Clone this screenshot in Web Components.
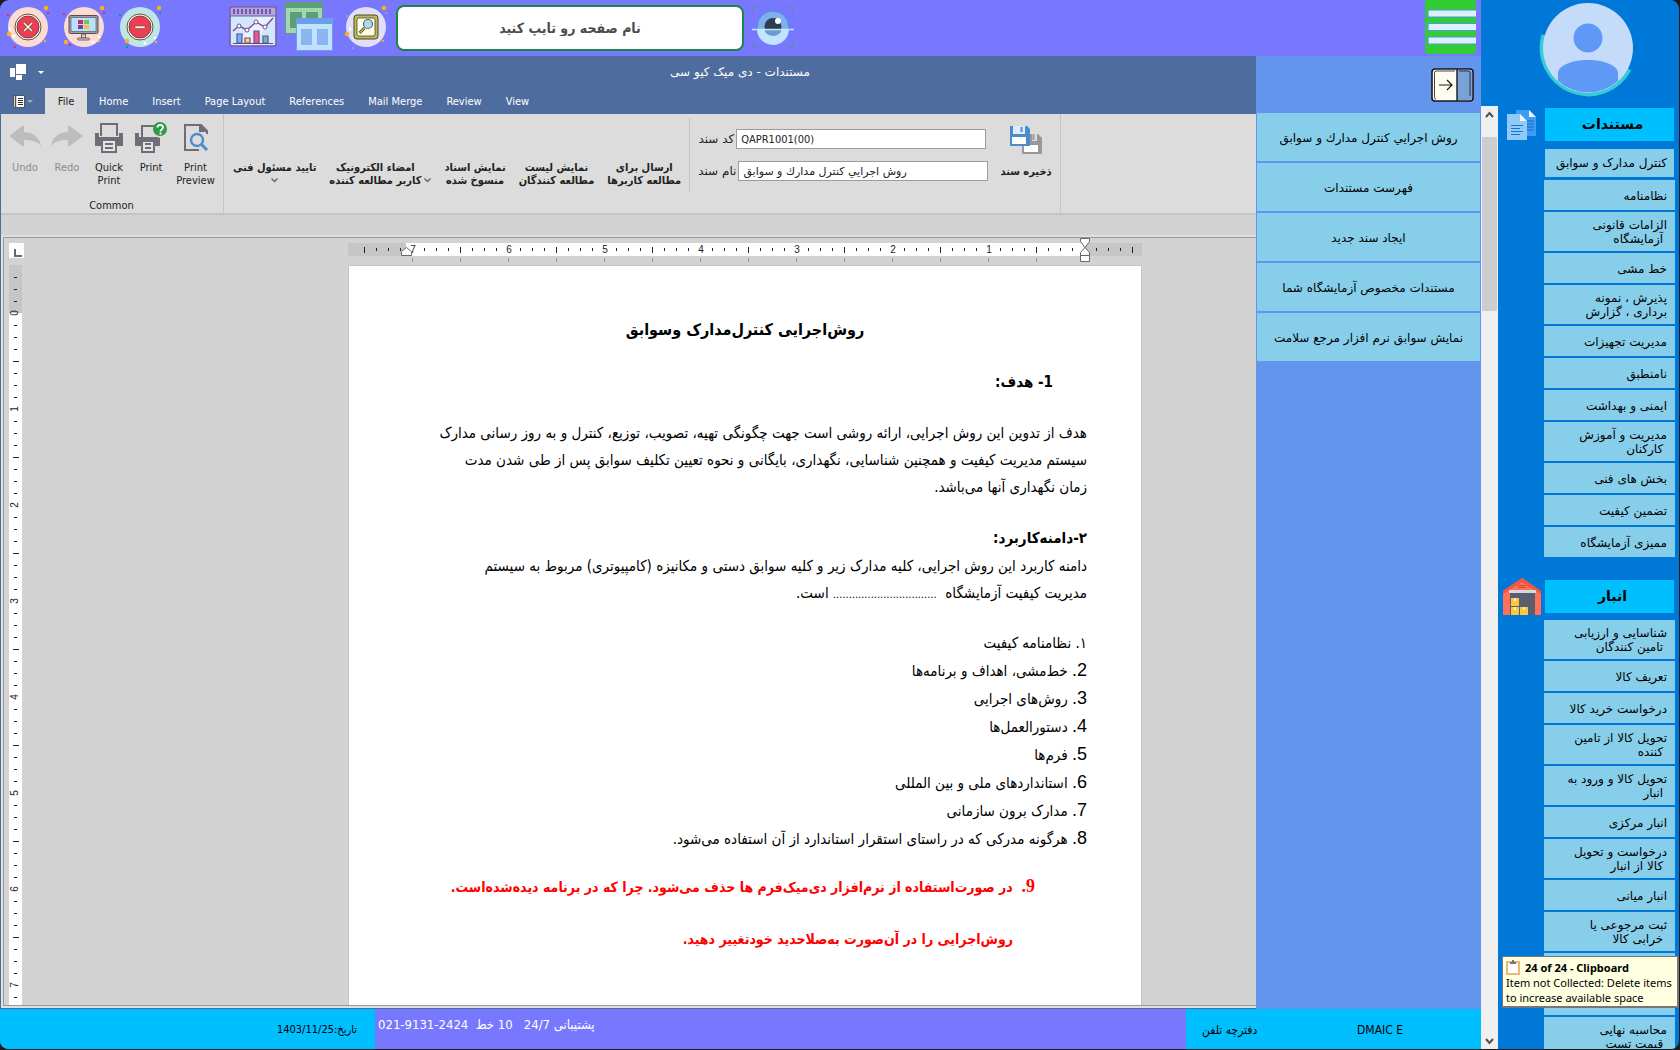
<!DOCTYPE html>
<html lang="fa">
<head>
<meta charset="utf-8">
<title>مستندات - دی میک کیو سی</title>
<style>
    html, body {
        height: 100%;
        margin: 0;
    }

    body {
        --wide: "DejaVu Sans", sans-serif;
        background: #1c1c1c;
        font-family: "DejaVu Sans Condensed", "DejaVu Sans", sans-serif;
        font-size: 11px;
        color: #000;
        overflow: hidden;
    }
</style>
</head>
<body>
<app-window>
    <top-bar slot="top"></top-bar>
    <word-editor slot="editor">
        <doc-page></doc-page>
    </word-editor>
    <doc-menu slot="menu">
        <menu-button>روش اجرايي كنترل مدارك و سوابق</menu-button>
        <menu-button>فهرست مستندات</menu-button>
        <menu-button>ایجاد سند جدید</menu-button>
        <menu-button>مستندات مخصوص آزمایشگاه شما</menu-button>
        <menu-button>نمایش سوابق نرم افزار مرجع سلامت</menu-button>
    </doc-menu>
    <status-bar slot="status"></status-bar>
    <side-nav slot="nav">
        <nav-section icon="docs" heading="مستندات">
            <nav-item current>کنترل مدارک و سوابق</nav-item>
            <nav-item>نظامنامه</nav-item>
            <nav-item>الزامات قانونی<br>&nbsp;آزمایشگاه</nav-item>
            <nav-item>خط مشی</nav-item>
            <nav-item>پذیرش ، نمونه<br>برداری ، گزارش</nav-item>
            <nav-item>مدیریت تجهیزات</nav-item>
            <nav-item>نامنطبق</nav-item>
            <nav-item>ایمنی و بهداشت</nav-item>
            <nav-item>مدیریت و آموزش<br>&nbsp;کارکنان</nav-item>
            <nav-item>بخش های فنی</nav-item>
            <nav-item>تضمین کیفیت</nav-item>
            <nav-item>ممیزی آزمایشگاه</nav-item>
        </nav-section>
        <nav-section icon="store" heading="انبار">
            <nav-item>شناسایی و ارزیابی<br>&nbsp;تامین کنندگان</nav-item>
            <nav-item>تعریف کالا</nav-item>
            <nav-item>درخواست خرید کالا</nav-item>
            <nav-item>تحویل کالا از تامین<br>&nbsp;کننده</nav-item>
            <nav-item>تحویل کالا و ورود به<br>&nbsp;انبار</nav-item>
            <nav-item>انبار مرکزی</nav-item>
            <nav-item>درخواست و تحویل<br>&nbsp;کالا از انبار</nav-item>
            <nav-item>انبار میانی</nav-item>
            <nav-item>ثبت مرجوعی یا<br>&nbsp;خرابی کالا</nav-item>
            <nav-item></nav-item>
            <nav-item></nav-item>
            <nav-item>محاسبه نهایی<br>&nbsp;قیمت تست</nav-item>
        </nav-section>
    </side-nav>
    <clip-toast slot="toast"></clip-toast>
</app-window>

<script>
const ICONS = {
    close: `<svg width="44" height="46" viewBox="0 0 44 46">
        <circle cx="22" cy="23" r="20" fill="#fadcd2"/>
        <circle cx="22" cy="23" r="13" fill="#fff" stroke="#6b4a3c" stroke-width="1"/>
        <circle cx="22" cy="23" r="11" fill="#ef3d55" stroke="#6b4a3c" stroke-width="1"/>
        <path d="M18 19l8 8M26 19l-8 8" stroke="#6b4a3c" stroke-width="3"/>
        <path d="M18 19l8 8M26 19l-8 8" stroke="#fff4e4" stroke-width="1.6"/>
        <circle cx="40" cy="4" r="2.2" fill="#fbb216"/><circle cx="3" cy="30" r="2.2" fill="#fbb216"/>
        <circle cx="39" cy="37" r="1.2" fill="#fbb216"/><circle cx="8" cy="32" r="1.4" fill="#fff"/><circle cx="4" cy="25" r="1.2" fill="#fff"/>
        <path d="M1 10h2v2H1zM41 8h2v2h-2zM8 42h2v2H8z" fill="#ef2c4c"/></svg>`,
    desktop: `<svg width="44" height="46" viewBox="0 0 44 46">
        <circle cx="22" cy="23" r="20" fill="#fadcd2"/>
        <rect x="7" y="11.5" width="29" height="18" rx="1.5" fill="#9aa0b4" stroke="#5d4a4a"/>
        <rect x="9" y="13.5" width="25" height="14" fill="#b4e3fb" stroke="#5d4a4a" stroke-width=".6"/>
        <path d="M19.5 30h4v4h-4z" fill="#ccd" stroke="#5d4a4a" stroke-width=".8"/>
        <rect x="15.5" y="34" width="12" height="2" rx="1" fill="#ccd" stroke="#5d4a4a" stroke-width=".8"/>
        <path d="M16 16h5v4h-5z" fill="#d9245c"/><path d="M22 16h5v4h-5z" fill="#7bc05a"/>
        <path d="M16 21h5v4h-5z" fill="#7b3f9e"/><path d="M22 21h5v4h-5z" fill="#f5c32c"/>
        <circle cx="40" cy="4" r="2.2" fill="#fbb216"/><circle cx="4" cy="38" r="2.2" fill="#fbb216"/>
        <circle cx="37" cy="37" r="1.2" fill="#fbb216"/><circle cx="31" cy="38" r="1.6" fill="#fff"/><circle cx="37" cy="33" r="1.2" fill="#fff"/>
        <path d="M1 9h2v2H1zM41 8h2v2h-2zM7 40h2v2H7z" fill="#ef2c4c"/></svg>`,
    minimize: `<svg width="44" height="46" viewBox="0 0 44 46">
        <circle cx="22" cy="23" r="20" fill="#bfe6e2"/>
        <circle cx="22" cy="23" r="13" fill="#fff" stroke="#6b4a3c"/>
        <circle cx="22" cy="23" r="11" fill="#ef3d55" stroke="#6b4a3c"/>
        <rect x="17" y="22" width="10" height="2.5" fill="#fff4e4" stroke="#6b4a3c" stroke-width=".6"/>
        <circle cx="41" cy="4" r="2.2" fill="#fbb216"/><circle cx="9" cy="37" r="2.2" fill="#fbb216"/>
        <circle cx="38" cy="38" r="1.2" fill="#fbb216"/><circle cx="27" cy="39" r="1.6" fill="#fff"/><circle cx="37" cy="34" r="1.2" fill="#fff"/>
        <path d="M1 10h2v2H1zM41 8h2v2h-2zM8 42h2v2H8z" fill="#0b9a98"/></svg>`,
    chart: `<svg width="48" height="42" viewBox="0 0 48 42">
        <rect x="1" y="1" width="46" height="39" rx="2" fill="#cfe8fb" stroke="#7c5aa6" stroke-width="1.6"/>
        <rect x="2" y="2" width="44" height="8" fill="#b3a5e0"/><path d="M1 10h46" stroke="#7c5aa6"/>
        <path d="M5 3v5M9 3v5M13 3v5M17 3v5M21 3v5M25 3v5M29 3v5M33 3v5M37 3v5M41 3v5" stroke="#5c4894" stroke-width="1.6"/>
        <path d="M28 11l-20 28h14L44 13V11z" fill="#e7f4ff"/>
        <path d="M4 25l6-5 8 4 9-8 9 5 8-9" fill="none" stroke="#7c4a90" stroke-width="1.4"/>
        <g fill="#fff" stroke="#7c4a90"><circle cx="10" cy="20" r="2"/><circle cx="18" cy="24" r="2"/><circle cx="27" cy="16" r="2"/><circle cx="36" cy="21" r="2"/></g>
        <g stroke="#6d4a90" stroke-width="1.2"><path fill="#62b9f4" d="M8 28h5v9H8z"/><path fill="#f9d65c" d="M16 32h5v5h-5z"/><path fill="#ef5a84" d="M25 25h5v12h-5z"/><path fill="#66c2a4" d="M34 30h5v7h-5z"/><path d="M4 37.5h40"/></g></svg>`,
    windows: `<svg width="51" height="49" viewBox="0 0 51 49">
        <path d="M0 0h38v32H0z" fill="#5b9f78"/><path d="M1 6h36v25H1z" fill="#a5d6b0"/>
        <path d="M5 10h12v16H5zM21 10h12v10H21z" fill="#5b9f78"/>
        <path d="M11 16h37v33H11z" fill="#6d9fe8"/><path d="M12 22h35v26H12z" fill="#bfe3ff"/>
        <path d="M16 27h11v16H16zM32 27h11v16H32z" fill="#8ab5f0"/></svg>`,
    find: `<svg width="44" height="46" viewBox="0 0 44 46">
        <circle cx="22" cy="23" r="20" fill="#e0dff7"/>
        <rect x="10" y="11" width="24" height="24" rx="3" fill="#b9b860" stroke="#4e4a20"/>
        <rect x="13" y="14" width="18" height="18" rx="2" fill="#fffce8" stroke="#4e4a20" stroke-width=".8"/>
        <circle cx="24" cy="20" r="4.5" fill="#a6dcec" stroke="#5c6c6c" stroke-width="1.2"/>
        <path d="M20.5 24l-5 5" stroke="#4e4a20" stroke-width="3"/><path d="M20.5 24l-5 5" stroke="#b9b860" stroke-width="1.4"/>
        <circle cx="40" cy="4" r="2.2" fill="#fbb216"/><circle cx="3" cy="30" r="2.2" fill="#fbb216"/>
        <circle cx="39" cy="37" r="1.2" fill="#fbb216"/><circle cx="6" cy="25" r="1.2" fill="#fff"/>
        <path d="M2 11h2v2H2zM41 8h2v2h-2zM8 43h2v2H8z" fill="#9b9bd0"/></svg>`,
    eye: `<svg width="42" height="42" viewBox="0 0 42 42">
        <path d="M1 7V1h6M35 1h6v6M41 35v6h-6M7 41H1v-6" fill="none" stroke="#6f7fc8" stroke-width="1.6"/>
        <circle cx="21" cy="21" r="16" fill="#7eb0ee" stroke="#5688d8"/>
        <path d="M5 23a16 16 0 0 0 32 0z" fill="#c0e6ff"/>
        <circle cx="21" cy="20.5" r="8.5" fill="#2c3e50"/><path d="M12.5 23a8.5 7 0 0 0 17 0z" fill="#6c9bd2"/>
        <circle cx="26" cy="15" r="3" fill="#fff"/><path d="M0 23.5h42" stroke="#c0e6ff" stroke-width="1.4"/></svg>`,
    burger: `<svg width="51" height="55" viewBox="0 0 51 55">
        <rect width="51" height="55" rx="4" fill="#32cd32"/>
        <g fill="#ddeeff" stroke="#4a9ae0" stroke-width="1.2"><path d="M52 11H3v7h49M52 24.5H3v7h49M52 38H3v7h49"/></g></svg>`,
    user: `<svg width="96" height="98" viewBox="0 0 96 98">
        <path d="M6 33A46 46 0 0 0 91 67" fill="none" stroke="#33ccd6" stroke-width="5"/>
        <circle cx="50" cy="46" r="45" fill="#c5dbfa"/><circle cx="50" cy="36" r="14.5" fill="#6098f6"/>
        <path d="M20 79V71c0-7 13-13 30-13s30 6 30 13v8a45 45 0 0 1-60 0z" fill="#6098f6"/></svg>`,
    panel: `<svg width="43" height="34" viewBox="0 0 43 34">
        <rect x="1" y="1" width="41" height="32" rx="3" fill="#fffdf2" stroke="#16181d" stroke-width="1.6"/>
        <path d="M26 2h13a2 2 0 0 1 2 2v26a2 2 0 0 1-2 2H26z" fill="#7aa2d8"/>
        <path d="M26 1v32" stroke="#16181d" stroke-width="1.4"/>
        <path d="M8 3H5a1.5 1.5 0 0 0-1.5 1.5v25A1.5 1.5 0 0 0 5 31M8 3h16M28 3h9a2 2 0 0 1 2 2v23" fill="none" stroke="#16181d" stroke-width=".8"/>
        <path d="M8 17h13M16 12l5 5-5 5" fill="none" stroke="#16181d" stroke-width="1.2"/></svg>`,
    docs: `<svg width="29" height="30" viewBox="0 0 29 30">
        <path d="M9 0h13l7 7v19H9z" fill="#3f9cf5"/><path d="M22 0v7h7z" fill="#e4f3ff"/>
        <path d="M20 11h7M20 14h7M20 17h7M20 20h7" stroke="#1767c0"/>
        <path d="M0 4h13l7 7v19H0z" fill="#90caf9"/><path d="M13 4v7h7z" fill="#e9f6ff"/>
        <path d="M4 15.5h12M4 18.5h9M4 21.5h12M4 24.5h9" stroke="#1976d2"/></svg>`,
    store: `<svg width="38" height="37" viewBox="0 0 38 37">
        <path d="M0 13L19 0l19 13v24h-7V13H7v24H0z" fill="#ff7058"/><path d="M7 15V9L19 3l12 6v6z" fill="#ff7058"/>
        <path d="M0 13L19 0l19 13v3L19 4 0 16z" fill="#f1543f"/>
        <path d="M15 7h8v1h-8zM15 9h8v1h-8z" fill="#cf4634"/><path d="M7 15h25v22H7z" fill="#5a5f6e"/>
        <path d="M6 12h27v3H6z" fill="#d8d8e0"/>
        <path d="M8 20h8v8H8zM8 29h8v8H8zM17 29h8v8h-8z" fill="#f9c846"/>
        <path d="M11 20h2v3h-2zM11 29h2v3h-2zM20 29h2v3h-2z" fill="#fff0a8"/></svg>`,
    logo: `<svg width="16" height="16" viewBox="0 0 16 16" fill="#fff"><path d="M6 0h10v10H6zM0 4h5v9H0zM6 11h6v5H6z"/></svg>`,
    caret: `<svg width="6" height="3" viewBox="0 0 6 3"><path d="M0 0h6L3 3z" fill="currentColor"/></svg>`,
    chevron: `<svg width="7" height="5" viewBox="0 0 7 5"><path d="M.5 .5l3 3 3-3" fill="none" stroke="currentColor" stroke-width="1.4"/></svg>`,
    appmenu: `<svg width="12" height="13" viewBox="0 0 12 13"><path d="M.5 .5h11v12H.5z" fill="#fff" stroke="#555"/><path d="M2.5 0v13" stroke="#555" stroke-width="1.5"/><path d="M5 3.5h5M5 5.5h5M5 7.5h5M5 9.5h5" stroke="#333"/></svg>`,
    undo: `<svg width="32" height="32" viewBox="0 0 32 32"><path d="M0 14L15 3v7c9 0 16 6 17 14-4-5-10-6-17-6v7z" fill="#bdbdbf"/></svg>`,
    redo: `<svg width="32" height="32" viewBox="0 0 32 32"><path d="M32 14L17 3v7C8 10 1 16 0 24c4-5 10-6 17-6v7z" fill="#bdbdbf"/></svg>`,
    quickprint: `<svg width="32" height="32" viewBox="0 0 32 32">
        <path d="M2 11h4v4h20v-4h4v13H2z" fill="#6e6e76"/><path d="M8 14V2h16v12" fill="none" stroke="#6e6e76" stroke-width="2"/>
        <path d="M9 18h14v12H9z" fill="#e4e4e4" stroke="#6e6e76" stroke-width="2"/><path d="M12 22h8M12 26h8" stroke="#6e6e76" stroke-width="2"/></svg>`,
    print: `<svg width="34" height="32" viewBox="0 0 34 32">
        <path d="M1 11h4v4h18l3 1v8H1z" fill="#6e6e76"/><path d="M8 15V4h12" fill="none" stroke="#6e6e76" stroke-width="2"/>
        <path d="M8 19h12v11H8z" fill="#e4e4e4" stroke="#6e6e76" stroke-width="2"/><path d="M11 22h6M11 26h6" stroke="#6e6e76" stroke-width="2"/>
        <circle cx="26" cy="7" r="7" fill="#2f9a4a"/><path d="M23.5 5.5c0-3.5 5.5-3.5 5.5 0 0 2-2.5 1.8-2.5 4M26.5 10.5v2" fill="none" stroke="#fff" stroke-width="1.8"/></svg>`,
    preview: `<svg width="32" height="32" viewBox="0 0 32 32">
        <path d="M27 12V9l-6-6H5v25h14" fill="none" stroke="#6e6e76" stroke-width="2"/><path d="M19 2l8 8h-8z" fill="#6e6e76"/>
        <circle cx="17" cy="18" r="6" fill="none" stroke="#4a8ccc" stroke-width="2.4"/><path d="M21 22l6 6" stroke="#4a8ccc" stroke-width="3"/></svg>`,
    saveall: `<svg width="32" height="30" viewBox="0 0 32 30">
        <path d="M12 8h16l4 4v16H12z" fill="#98989c"/><path d="M14 19h14v7H14z" fill="#fff"/><path d="M22 8h5v7h-5z" fill="#dcdcdc"/><path d="M23.5 8v6" stroke="#98989c" stroke-width="2"/>
        <path d="M0 0h17l3 3v17H0z" fill="#4a8ccc"/><path d="M2 11h14v7H2z" fill="#fff"/><path d="M3 0h12v8H3z" fill="#e0ecf8"/><path d="M11.5 1v5" stroke="#4a8ccc" stroke-width="2"/></svg>`,
    clip: `<svg width="14" height="15" viewBox="0 0 14 15"><path d="M0 1h14v14H0z" fill="#e8b878"/><path d="M2 3h10v10H2z" fill="#fff"/><path d="M4 4V2h2V0h2v2h2v2z" fill="#777"/></svg>`,
    up: `<svg width="17" height="17" viewBox="0 0 17 17"><path d="M5 11l3.5-4 3.5 4" fill="none" stroke="#505050" stroke-width="2"/></svg>`,
    down: `<svg width="17" height="17" viewBox="0 0 17 17"><path d="M5 7l3.5 4L12 7" fill="none" stroke="#505050" stroke-width="2"/></svg>`
};

// Shared base: puts the subclass's css and markup in an open shadow root
class BaseElement extends HTMLElement {
    constructor() {
        super();
        this.attachShadow({ mode: "open" });
    }

    connectedCallback() {
        this.shadowRoot.innerHTML = `
            <style>
                * { box-sizing: border-box; }
                button, input { font: inherit; color: inherit; }
                button { border: 0; padding: 0; background: none; cursor: pointer; }
                ${this.css()}
            </style>
            ${this.html()}
        `;
    }
}

class AppIcon extends BaseElement {
    css() {
        return `:host { display: inline-flex; flex: none; } svg { display: block; }`;
    }

    html() {
        return ICONS[this.getAttribute("name")] || "";
    }
}
customElements.define("app-icon", AppIcon);

class AppWindow extends BaseElement {
    css() {
        return `
            :host {
                display: grid;
                grid-template-columns: minmax(0, 1fr) 225px 198px;
                grid-template-rows: 56px minmax(0, 1fr) 40px;
                grid-template-areas: "top top nav" "editor menu nav" "status status nav";
                height: 100vh;
                border: solid #1c1c1c;
                border-width: 0 1px 1px 0;
                border-radius: 9px;
                overflow: hidden;
                box-sizing: border-box;
                position: relative;
            }
            ::slotted([slot="top"]) { grid-area: top; }
            ::slotted([slot="editor"]) { grid-area: editor; }
            ::slotted([slot="menu"]) { grid-area: menu; }
            ::slotted([slot="status"]) { grid-area: status; }
            ::slotted([slot="nav"]) { grid-area: nav; }
            ::slotted([slot="toast"]) { position: absolute; right: 0; bottom: 41px; }
        `;
    }

    html() {
        return `<slot name="top"></slot><slot name="editor"></slot><slot name="menu"></slot>
            <slot name="status"></slot><slot name="nav"></slot><slot name="toast"></slot>`;
    }
}
customElements.define("app-window", AppWindow);

class TopBar extends BaseElement {
    css() {
        return `
            :host { display: flex; align-items: center; background: #7878ff; padding: 0 5px 0 6px; }
            .group { display: flex; align-items: center; }
            .windows { gap: 12px; }
            .tools { margin-left: 67px; gap: 8px; }
            input {
                width: 348px;
                height: 46px;
                margin: 0 8px;
                border: 2px solid #1e8449;
                border-radius: 8px;
                background: #fff;
                text-align: center;
                font-size: 14px;
                font-weight: bold;
                color: #4d4d4d;
            }
            input::placeholder { color: #4d4d4d; opacity: 1; }
            .burger { margin-left: auto; }
        `;
    }

    html() {
        return `
            <div class="group windows">
                <button aria-label="بستن"><app-icon name="close"></app-icon></button>
                <button aria-label="دسکتاپ"><app-icon name="desktop"></app-icon></button>
                <button aria-label="کوچک کردن"><app-icon name="minimize"></app-icon></button>
            </div>
            <div class="group tools">
                <button aria-label="نمودار"><app-icon name="chart"></app-icon></button>
                <button aria-label="پنجره ها"><app-icon name="windows"></app-icon></button>
                <button aria-label="جستجو"><app-icon name="find"></app-icon></button>
            </div>
            <input type="text" dir="rtl" placeholder="نام صفحه رو تایپ کنید" aria-label="نام صفحه">
            <button aria-label="نمایش"><app-icon name="eye"></app-icon></button>
            <button class="burger" aria-label="منو"><app-icon name="burger"></app-icon></button>
        `;
    }
}
customElements.define("top-bar", TopBar);

class RibbonButton extends BaseElement {
    css() {
        return `
            :host { display: block; }
            :host([disabled]) button { color: #8c8c8c; }
            button {
                display: flex;
                flex-direction: column;
                align-items: center;
                width: 100%;
                min-height: 68px;
                line-height: 13px;
                white-space: nowrap;
                text-align: center;
            }
            .icon { height: 39px; display: flex; align-items: flex-start; }
            :host([bold]) button { font-weight: bold; }
            .label { display: flex; align-items: flex-end; gap: 3px; }
            :host([bold]) .label span { direction: rtl; }
            :host([drop="below"]) .label { flex-direction: column; align-items: center; gap: 0; }
            .drop { color: #666; padding: 4px 0; }
        `;
    }

    html() {
        const icon = this.getAttribute("icon");
        const disabled = this.hasAttribute("disabled") ? "disabled" : "";
        const drop = this.hasAttribute("drop")
            ? `<app-icon class="drop" name="chevron"></app-icon>` : "";
        return `
            <button ${disabled}>
                <span class="icon">${icon ? `<app-icon name="${icon}"></app-icon>` : ""}</span>
                <span class="label"><span><slot></slot></span>${drop}</span>
            </button>
        `;
    }
}
customElements.define("ribbon-button", RibbonButton);

// Word ruler, 96px to the inch, twelve pixels to a tick
class DocRuler extends BaseElement {
    css() {
        return `
            :host { display: block; }
            svg { display: block; overflow: hidden; }
            text { font: 10px "Liberation Sans", sans-serif; fill: #222; text-anchor: middle; }
        `;
    }

    html() {
        return this.hasAttribute("vertical") ? this.vertical() : this.horizontal();
    }

    horizontal() {
        const zero = 737;
        let marks = "";
        for (let i = -4; i <= 60; i++) {
            const x = zero - i * 12;
            if (i % 8 === 0) {
                if (i > 0) marks += `<text x="${x}" y="10">${i / 8}</text>`;
            } else {
                const half = i % 4 === 0;
                marks += `<path d="M${x - 0.5} ${half ? 4 : 5}v${half ? 6 : 3}" stroke="#222"/>`;
            }
            if (i % 4 === 0 && i > 0 && i <= 56) {
                marks += `<path d="M${x - 0.5} 15v4" stroke="#999"/>`;
            }
        }
        return `
            <svg width="794" height="26" viewBox="0 -5 794 26">
                <path d="M0 0h794v13H0z" fill="#c6c6c6"/>
                <path d="M58 0h679v13H58z" fill="#fff"/>
                ${marks}
                <g fill="#fff" stroke="#666">
                    <path d="M53.5 12.5v-4l5-4 5 4v4z"/>
                    <path d="M732.5 -4.5h9v3l-4.5 6-4.5-6zM732.5 12.5v-3l4.5-5 4.5 5v3zM732.5 12.5h9v6h-9z"/>
                </g>
            </svg>
        `;
    }

    vertical() {
        let marks = "";
        for (let i = -3; i <= 60; i++) {
            const y = 48 + i * 12;
            if (i % 8 === 0) {
                marks += `<text transform="translate(9 ${y}) rotate(-90)">${i / 8}</text>`;
            } else {
                const half = i % 4 === 0;
                marks += `<path d="M${half ? 4 : 5} ${y + 0.5}h${half ? 6 : 3}" stroke="#222"/>`;
            }
        }
        return `
            <svg width="13" height="770" viewBox="0 0 13 770">
                <path d="M0 0h13v770H0z" fill="#fff"/>
                <path d="M0 0h13v48H0z" fill="#c6c6c6"/>
                ${marks}
            </svg>
        `;
    }
}
customElements.define("doc-ruler", DocRuler);

class WordEditor extends BaseElement {
    css() {
        return `
            :host { display: flex; flex-direction: column; min-height: 0; background: #4f6c9e; padding: 0 0 1px 1px; }
            .title { display: flex; align-items: center; height: 32px; padding-left: 9px; gap: 12px; color: #fff; flex: none; }
            .title h1 { flex: 1; margin: 0; padding-left: 168px; text-align: center; font: 12px var(--wide); }
            .tabs { display: flex; height: 26px; padding-left: 12px; flex: none; color: #fff; }
            .tabs button { padding: 0 12px; line-height: 28px; }
            .tabs .app { display: flex; align-items: center; gap: 2px; padding: 0 13px 0 0; width: 32px; color: #aaa; }
            .tabs .active { background: #dcdcdc; color: #222; width: 42px; padding: 0; }
            .ribbon { display: flex; height: 101px; background: #dcdcdc; border-bottom: 2px solid #c4c4c4; flex: none; color: #222; }
            .group { display: flex; flex-direction: column; justify-content: space-between; width: 223px; padding: 8px 4px 0 3px; border-right: 1px solid #c4c4c4; }
            .row { display: flex; }
            .row ribbon-button { width: 42px; }
            .row ribbon-button:last-child { flex: 1; }
            .name { text-align: center; line-height: 14px; }
            .actions { display: flex; flex: none; gap: 13px; padding: 8px 8px 0 9px; }
            .fields { display: flex; flex-direction: column; gap: 12px; margin-top: 4px; padding: 11px 12px 0 8px; height: 74px; border-left: 1px solid #c4c4c4; }
            .fields div { display: flex; align-items: center; gap: 2px; height: 20px; }
            label { direction: rtl; min-width: 36px; white-space: nowrap; font: 12px var(--wide); }
            input { width: 250px; height: 20px; border: 1px solid #9c9c9c; background: #fff; padding: 0 4px; font-size: 11px; }
            #name { font-family: var(--wide); }
            .save { padding: 12px 8px 0 0; border-right: 1px solid #c4c4c4; }
            .band { height: 21px; background: #d3d3d3; flex: none; }
            .canvas {
                flex: 1;
                min-height: 0;
                display: flex;
                margin: 1px 0 2px 2px;
                padding: 5px 0 0 5px;
                background: #d3d3d3;
                border: solid #999;
                border-width: 1px 0 1px 1px;
                outline: 2px solid #e0e0e0;
                overflow: hidden;
            }
            .left { display: flex; flex-direction: column; gap: 7px; flex: none; }
            .corner { width: 15px; height: 15px; background: #fff; padding: 6px 4px 3px 5px; }
            .corner::before { content: ""; display: block; width: 6px; height: 6px; border: solid #666; border-width: 0 0 2px 2px; }
            .view { flex: 1; display: flex; flex-direction: column; align-items: center; padding-left: 210px; margin-top: -5px; min-width: 0; }
            ::slotted(doc-page) { flex: none; margin-top: 1px; }
        `;
    }

    html() {
        const tabs = ["Home", "Insert", "Page Layout", "References", "Mail Merge", "Review", "View"];
        return `
            <div class="title">
                <app-icon name="logo"></app-icon><app-icon name="caret"></app-icon>
                <h1 dir="rtl">مستندات - دی میک کیو سی</h1>
            </div>
            <nav class="tabs">
                <button class="app" aria-label="Application menu"><app-icon name="appmenu"></app-icon><app-icon name="caret"></app-icon></button>
                <button class="active">File</button>
                ${tabs.map(tab => `<button>${tab}</button>`).join("")}
            </nav>
            <div class="ribbon">
                <div class="group">
                    <div class="row">
                        <ribbon-button icon="undo" disabled>Undo</ribbon-button>
                        <ribbon-button icon="redo" disabled>Redo</ribbon-button>
                        <ribbon-button icon="quickprint">Quick<br>Print</ribbon-button>
                        <ribbon-button icon="print">Print</ribbon-button>
                        <ribbon-button icon="preview">Print<br>Preview</ribbon-button>
                    </div>
                    <div class="name">Common</div>
                </div>
                <div class="actions">
                    <ribbon-button bold drop="below">تایید مسئول فنی</ribbon-button>
                    <ribbon-button bold drop="side">امضاء الکترونیک<br>کاربر مطالعه کننده</ribbon-button>
                    <ribbon-button bold>نمایش اسناد<br>منسوخ شده</ribbon-button>
                    <ribbon-button bold>نمایش لیست<br>مطالعه کنندگان</ribbon-button>
                    <ribbon-button bold>ارسال برای<br>مطالعه کاربرها</ribbon-button>
                </div>
                <div class="fields">
                    <div><label for="code">کد سند</label><input id="code" type="text" value="QAPR1001(00)"></div>
                    <div><label for="name">نام سند</label><input id="name" type="text" value="روش اجرايي كنترل مدارك و سوابق"></div>
                </div>
                <div class="save">
                    <ribbon-button bold icon="saveall">ذخیره سند</ribbon-button>
                </div>
            </div>
            <div class="band"></div>
            <div class="canvas">
                <div class="left">
                    <div class="corner"></div>
                    <doc-ruler vertical></doc-ruler>
                </div>
                <div class="view">
                    <doc-ruler></doc-ruler>
                    <slot></slot>
                </div>
            </div>
        `;
    }
}
customElements.define("word-editor", WordEditor);

class DocPage extends BaseElement {
    css() {
        return `
            :host {
                display: block;
                width: 794px;
                height: 1123px;
                padding: 50px 54px 0;
                box-sizing: border-box;
                background: #fff;
                border: 1px solid #c6c6c6;
                direction: rtl;
                font-size: 15px;
                line-height: 27px;
                white-space: nowrap;
            }
            h2, h3, p, ol { margin: 0; }
            h2 { font-size: 16px; text-align: center; }
            h3 { font-size: 15px; }
            .first { margin: 26px 34px 24px 0; }
            .scope { margin-top: 22px; line-height: 30px; }
            .dots { font-size: 11px; }
            ol { list-style: none; padding: 0; margin-top: 21px; line-height: 28px; }
            .num { font: 18px "Liberation Sans", sans-serif; }
            .note { margin: 21px 52px 0 0; color: #f00; font-weight: bold; font-size: 14px; }
            .note p { margin-bottom: 25px; padding-right: 22px; }
            .note p:first-child { padding: 0; }
            .note .num { font: bold 18px "Liberation Serif", serif; }
        `;
    }

    html() {
        const items = ["خط‌مشی، اهداف و برنامه‌ها", "روش‌های اجرایی", "دستورالعمل‌ها", "فرم‌ها",
            "استانداردهای ملی و بین المللی", "مدارک برون سازمانی",
            "هرگونه مدرکی که در راستای استقرار استاندارد از آن استفاده می‌شود."];
        return `
            <h2>روش‌اجرایی کنترل‌مدارک وسوابق</h2>
            <h3 class="first">1- هدف:</h3>
            <p>هدف از تدوین این روش اجرایی، ارائه روشی است جهت چگونگی تهیه، تصویب، توزیع، کنترل و به روز رسانی مدارک<br>
            سیستم مدیریت کیفیت و همچنین شناسایی، نگهداری، بایگانی و نحوه تعیین تکلیف سوابق پس از طی شدن مدت<br>
            زمان نگهداری آنها می‌باشد.</p>
            <h3 class="scope">۲-دامنه‌کاربرد:</h3>
            <p>دامنه کاربرد این روش اجرایی، کلیه مدارک زیر و کلیه سوابق دستی و مکانیزه (کامپیوتری) مربوط به سیستم<br>
            مدیریت کیفیت آزمایشگاه &nbsp;<span class="dots">.................................</span> است.</p>
            <ol>
                <li>۱. نظامنامه کیفیت</li>
                ${items.map((item, i) => `<li><span class="num">${i + 2}.</span> ${item}</li>`).join("")}
            </ol>
            <div class="note">
                <p><span class="num">9.</span> &nbsp;در صورت‌استفاده از نرم‌افزار دی‌میک‌فرم ها حذف می‌شود. چرا که در برنامه دیده‌شده‌است.</p>
                <p>روش‌اجرایی را در آن‌صورت به‌صلاحدید خودتغییر دهید.</p>
            </div>
        `;
    }
}
customElements.define("doc-page", DocPage);

class DocMenu extends BaseElement {
    css() {
        return `
            :host { display: flex; flex-direction: column; gap: 2px; padding: 0 1px; background: #6495ed; }
            .toggle { display: flex; align-self: flex-end; margin: 12px 6px 9px 0; }
        `;
    }

    html() {
        return `<button class="toggle" aria-label="جمع کردن"><app-icon name="panel"></app-icon></button><slot></slot>`;
    }
}
customElements.define("doc-menu", DocMenu);

class MenuButton extends BaseElement {
    css() {
        return `
            :host { display: block; }
            button { width: 100%; height: 48px; padding-top: 2px; background: #87ceeb; direction: rtl; font: 12px var(--wide); }
        `;
    }

    html() {
        return `<button><slot></slot></button>`;
    }
}
customElements.define("menu-button", MenuButton);

class SideNav extends BaseElement {
    css() {
        return `
            :host { display: flex; flex-direction: column; min-height: 0; background: #0078d7; }
            .user { display: flex; justify-content: center; height: 106px; padding: 2px 0 0 12px; flex: none; }
            .body { display: flex; flex: 1; min-height: 0; }
            .bar { display: flex; flex-direction: column; justify-content: space-between; width: 17px; background: #f0f0f0; flex: none; }
            .thumb { height: 174px; margin: 14px 1px auto; background: #cdcdcd; }
            .list { flex: 1; overflow: hidden; }
        `;
    }

    html() {
        return `
            <div class="user"><app-icon name="user"></app-icon></div>
            <div class="body">
                <div class="bar">
                    <app-icon name="up"></app-icon>
                    <div class="thumb"></div>
                    <app-icon name="down"></app-icon>
                </div>
                <div class="list"><slot></slot></div>
            </div>
        `;
    }
}
customElements.define("side-nav", SideNav);

class NavSection extends BaseElement {
    css() {
        return `
            :host { display: block; margin-bottom: 21px; }
            .head { display: flex; align-items: center; height: 37px; margin-bottom: 5px; }
            .icon { display: flex; justify-content: center; width: 47px; }
            h2 { flex: 1; margin: 0 5px 0 0; padding-left: 6px; background: #00bfff; font: bold 14px/33px var(--wide); text-align: center; direction: rtl; }
            .items { display: flex; flex-direction: column; gap: 2px; padding: 0 4px 0 46px; }
        `;
    }

    html() {
        return `
            <div class="head">
                <span class="icon"><app-icon name="${this.getAttribute("icon")}"></app-icon></span>
                <h2>${this.getAttribute("heading")}</h2>
            </div>
            <div class="items"><slot></slot></div>
        `;
    }
}
customElements.define("nav-section", NavSection);

class NavItem extends BaseElement {
    css() {
        return `
            :host { display: block; }
            button {
                display: block;
                width: 100%;
                min-height: 30px;
                padding: 6px 8px 5px;
                background: #87ceeb;
                text-align: right;
                direction: rtl;
                font: 12px/14px var(--wide);
                white-space: nowrap;
            }
            :host([current]) { padding: 1px; }
            :host([current]) button { min-height: 28px; padding: 5px 7px; }
        `;
    }

    html() {
        return `<button><slot></slot></button>`;
    }
}
customElements.define("nav-item", NavItem);

class StatusBar extends BaseElement {
    css() {
        return `
            :host { display: flex; background: #7878ff; font-size: 12px; }
            .date { width: 375px; padding: 14px 18px 0 0; background: #00bfff; direction: rtl; font-size: 11px; }
            .support { flex: 1; padding: 8px 3px 0; color: #fff; font-size: 13px; }
            .phone { display: flex; width: 295px; background: #00bfff; padding: 14px 78px 0 16px; justify-content: space-between; }
            a { color: #000; text-decoration: none; }
        `;
    }

    html() {
        return `
            <div class="date">تاریخ:1403/11/25</div>
            <div class="support"><bdi dir="rtl">پشتیبانی 24/7 &nbsp; 10 خط &nbsp;<bdi dir="ltr">021-9131-2424</bdi></bdi></div>
            <div class="phone"><a href="#phone">دفترچه تلفن</a><span>DMAIC E</span></div>
        `;
    }
}
customElements.define("status-bar", StatusBar);

class ClipToast extends BaseElement {
    css() {
        return `
            :host {
                display: block;
                width: 177px;
                padding: 3px 0 1px 3px;
                box-sizing: border-box;
                background: #ffffe1;
                border: solid #767676;
                border-width: 1px 2px 2px 1px;
                color: #000;
                font: 11px/15px "Noto Sans", sans-serif;
                white-space: nowrap;
            }
            .head { display: flex; align-items: center; gap: 5px; font-weight: bold; }
        `;
    }

    html() {
        return `
            <div class="head"><app-icon name="clip"></app-icon><span>24 of 24 - Clipboard</span></div>
            <div>Item not Collected: Delete items<br>to increase available space</div>
        `;
    }
}
customElements.define("clip-toast", ClipToast);
</script>
</body>
</html>
